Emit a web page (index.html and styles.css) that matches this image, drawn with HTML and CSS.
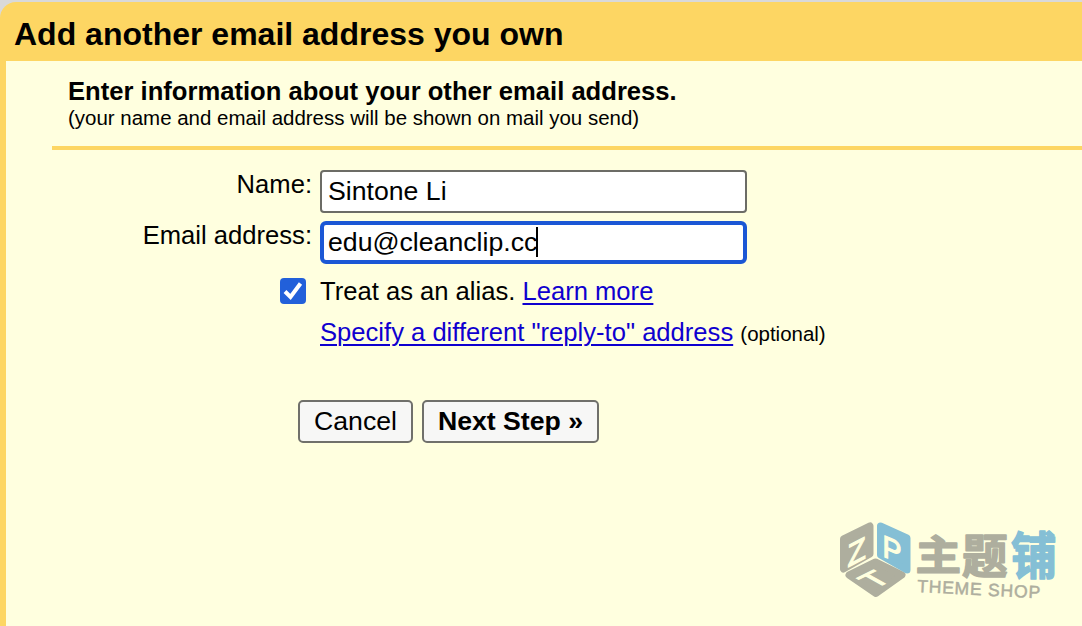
FILE: index.html
```html
<!DOCTYPE html>
<html lang="en">

<head>
    <meta charset="UTF-8">
    <meta name="viewport" content="width=device-width, initial-scale=1.0">
    <title>Add another email address you own</title>
    <link rel="stylesheet" href="styles.css">
</head>

<body>
    <div class="window">
        <h1 class="title">Add another email address you own</h1>
        <div class="content">
            <div class="intro">
                <h2>Enter information about your other email address.</h2>
                <p>(your name and email address will be shown on mail you send)</p>
            </div>
            <form>
                <div class="row">
                    <label for="name">Name:</label>
                    <input type="text" id="name" value="Sintone Li" />
                </div>
                <div class="row">
                    <label for="email">Email address:</label>
                    <div class="field">
                        <input type="text" id="email" class="focus" value="edu@cleanclip.cc" />
                        <i class="caret"></i>
                    </div>
                </div>
                <div class="row alias">
                    <span class="check">
                        <svg width="26" height="26" viewBox="0 0 26 26">
                            <path d="M5 13.5l5.5 5.5L20.5 5.5" fill="none" stroke="#fff" stroke-width="4" />
                        </svg>
                    </span>
                    <p>Treat as an alias. <a href="#">Learn more</a></p>
                </div>
                <div class="row reply">
                    <span></span>
                    <p><a href="#">Specify a different "reply-to" address</a> <small>(optional)</small></p>
                </div>
                <div class="buttons">
                    <button type="button" class="cancel">Cancel</button>
                    <button type="button" class="next">Next Step »</button>
                </div>
            </form>
        </div>
        <!-- logo -->
        <svg class="logo" width="230" height="90" viewBox="835 515 230 90">
            <g fill="#aeae9e" stroke="#aeae9e" stroke-width="7" stroke-linejoin="round">
                <path d="M843.5 539L870 526V554L843.5 569Z" />
                <path d="M849 575L875.5 562L902 575L876 593.5Z" />
                <path d="M880.5 526L907 538V570L880.5 555Z" fill="#85bfd5" stroke="#85bfd5" />
            </g>
            <g class="cube">
                <text transform="matrix(1 -.52 0 1.05 847.5 567.5)">Z</text>
                <text transform="matrix(.95 .42 0 1.03 882.5 556)">P</text>
                <text transform="matrix(1 -.5 .9 .5 874.5 589)">T</text>
            </g>
            <g class="cn">
                <text transform="matrix(.97 0 0 .88 915.5 569.5)">主</text>
                <text transform="matrix(.97 0 0 1 962 572.5)">题</text>
                <text class="blue" transform="matrix(.97 0 0 1.07 1011 573.5)">铺</text>
            </g>
            <text class="shop" transform="translate(917 592) rotate(3)" textLength="123">THEME SHOP</text>
        </svg>
    </div>
</body>

</html>
```
FILE: styles.css
```css
* {
    margin: 0;
    padding: 0;
    box-sizing: border-box;
}

body {
    background: #d9d9d9;
    color: #000;
    font: 25.6px/30px "Liberation Sans", Arial, sans-serif;
    overflow: hidden;
}

a {
    color: #0f00cf;
    text-decoration: underline;
    text-decoration-thickness: 2px;
    text-underline-offset: 3px;
}

.window {
    position: relative;
    height: 624px;
    margin-top: 2px;
    padding-left: 6px;
    background: #fdd663;
    border-top-left-radius: 16px;
}

.title {
    height: 59px;
    padding: 12px 0 0 8px;
    font-size: 32px;
    line-height: 40px;
}

.content {
    height: 565px;
    padding: 15px 0 0 46px;
    background: #ffffdf;
}

.intro {
    padding: 0 0 16px 16px;
    border-bottom: 4px solid #fdd663;
}

.intro h2 {
    font-size: 25.6px;
}

.intro p {
    font-size: 20.48px;
    line-height: 24px;
}

form {
    padding-top: 20px;
}

.row {
    display: grid;
    grid-template-columns: 260px 1fr;
    column-gap: 8px;
    margin-bottom: 8px;
}

.row label {
    margin-top: -1px;
    text-align: right;
}

input {
    display: block;
    width: 427px;
    height: 43px;
    padding: 0 6px;
    border: 2px solid #6c6c66;
    border-radius: 4px;
    background: #fff;
    color: #000;
    font: inherit;
    font-size: 26.67px;
    outline: none;
}

input.focus {
    padding: 0 4px;
    border: 4px solid #1b57d5;
    border-radius: 6px;
}

.field {
    position: relative;
}

.caret {
    position: absolute;
    left: 216px;
    top: 6px;
    width: 2px;
    height: 30px;
    background: #000;
}

.alias {
    margin: 12px 0 11px;
}

.check {
    width: 26px;
    height: 26px;
    margin: 2px 6px 0 auto;
    border-radius: 4px;
    background: #2260da;
}

.check svg {
    display: block;
}

.reply {
    margin: 0;
}

small {
    font-size: 20.48px;
    line-height: 20px;
}

.buttons {
    display: flex;
    gap: 9px;
    padding: 53px 0 0 246px;
}

button {
    height: 43px;
    padding-bottom: 2px;
    border: 2px solid #70706b;
    border-radius: 5px;
    background: #f7f7f6;
    color: #000;
    font: inherit;
    font-size: 26.67px;
    white-space: nowrap;
}

.cancel {
    width: 115px;
}

.next {
    width: 177px;
    font-weight: bold;
}

.logo {
    position: absolute;
    left: 835px;
    top: 513px;
}

.cube {
    font: 30px "Liberation Sans", sans-serif;
    fill: #ffffdf;
    stroke: #ffffdf;
    stroke-width: 1.2;
}

.cn {
    font: bold 47px "Noto Sans CJK SC", sans-serif;
    fill: #aeae9e;
    stroke: #aeae9e;
    stroke-width: 1.6;
    stroke-linejoin: round;
}

.cn .blue {
    fill: #85bfd5;
    stroke: #85bfd5;
}

.shop {
    font: 17.5px "Liberation Sans", sans-serif;
    fill: #aeae9e;
    stroke: #aeae9e;
    stroke-width: .5;
}
```
